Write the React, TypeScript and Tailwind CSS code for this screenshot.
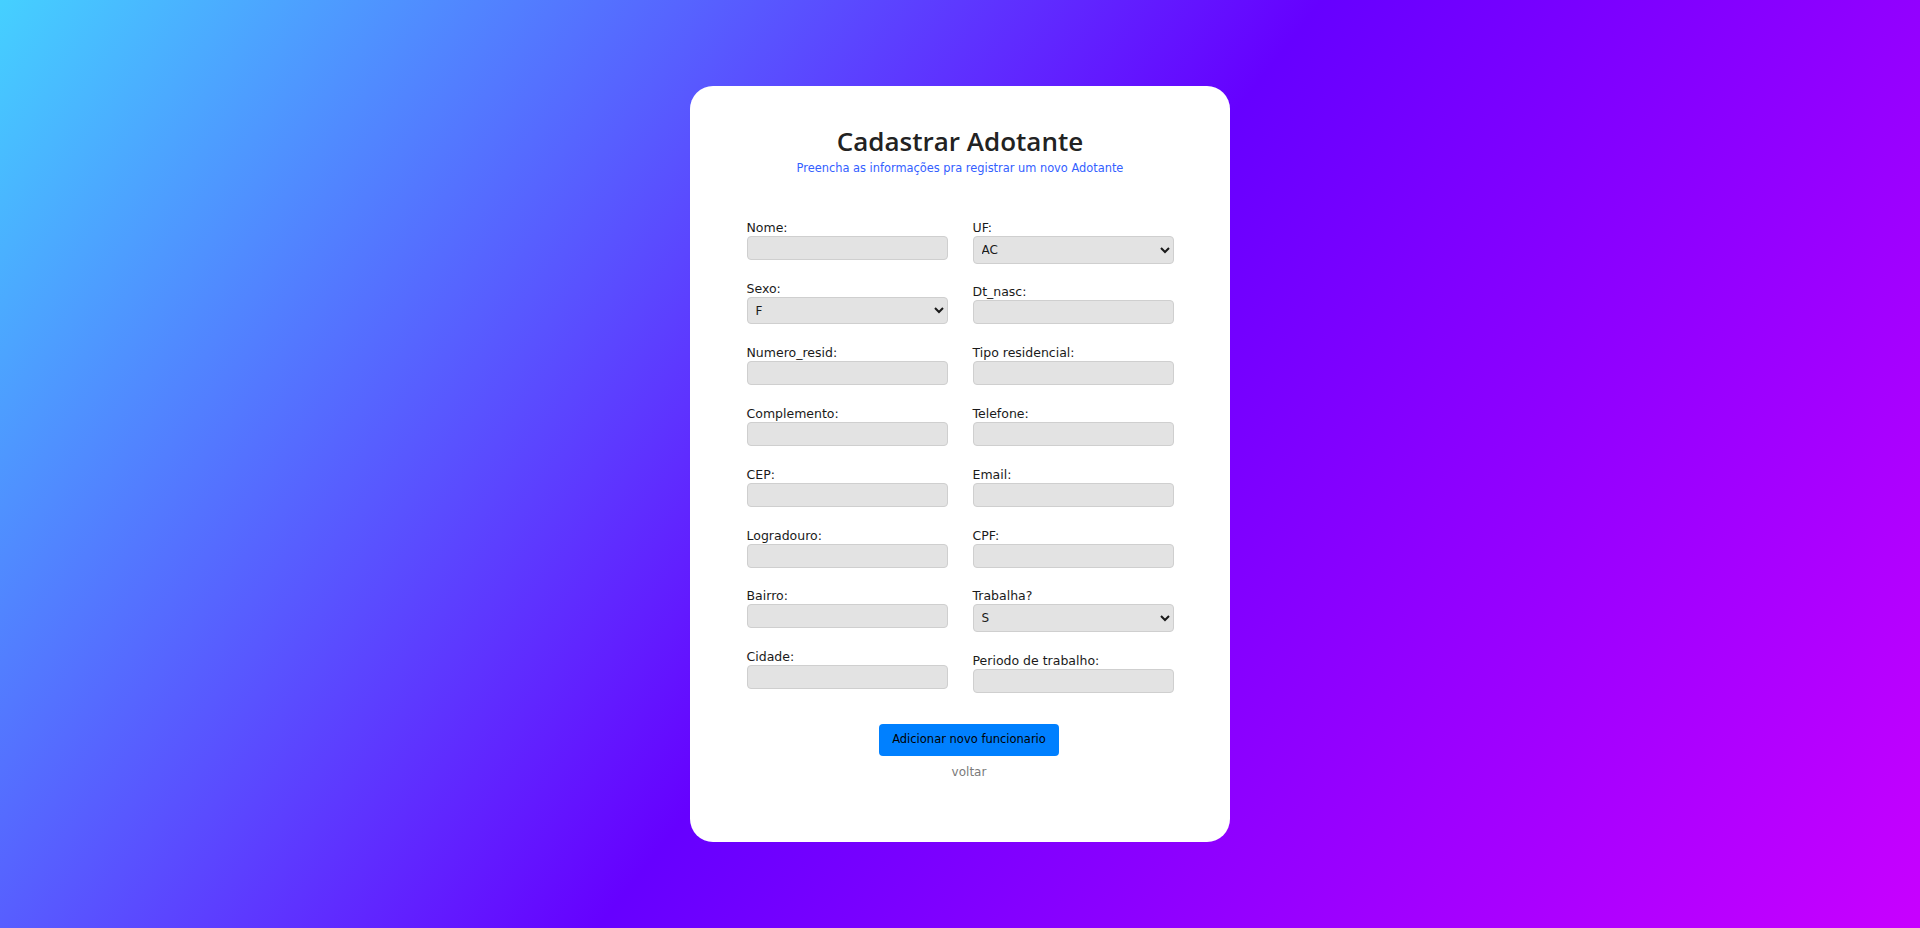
import React from "react";

type Field = { label: string; options?: string[] };

const leftFields: Field[] = [
  { label: "Nome:" },
  { label: "Sexo:", options: ["F", "M"] },
  { label: "Numero_resid:" },
  { label: "Complemento:" },
  { label: "CEP:" },
  { label: "Logradouro:" },
  { label: "Bairro:" },
  { label: "Cidade:" },
];

const rightFields: Field[] = [
  {
    label: "UF:",
    options: ["AC", "AL", "AP", "AM", "BA", "CE", "DF", "ES", "GO", "MA", "MT", "MS", "MG", "PA", "PB", "PR", "PE", "PI", "RJ", "RN", "RS", "RO", "RR", "SC", "SP", "SE", "TO"],
  },
  { label: "Dt_nasc:" },
  { label: "Tipo residencial:" },
  { label: "Telefone:" },
  { label: "Email:" },
  { label: "CPF:" },
  { label: "Trabalha?", options: ["S", "N"] },
  { label: "Periodo de trabalho:" },
];

function FieldBox({ f }: { f: Field }) {
  return (
    <div className="flex flex-col mb-[20.8px]">
      <label className="h-[16px] leading-[16px] text-[12.5px] text-[#1a1a1a]">{f.label}</label>
      {f.options ? (
        <select className="h-[27.6px] w-full rounded-[4px] border border-[#cfcfcf] bg-[#e3e3e3] pl-[4px] text-[12px] text-[#1a1a1a]">
          {f.options.map((o) => (
            <option key={o}>{o}</option>
          ))}
        </select>
      ) : (
        <input
          type="text"
          className="h-[24px] w-full rounded-[4px] border border-[#cfcfcf] bg-[#e3e3e3] px-[6px] text-[12px] text-[#1a1a1a] outline-none"
        />
      )}
    </div>
  );
}

export default function App() {
  return (
    <div className="flex h-screen w-full items-center justify-center bg-[linear-gradient(128deg,#45d0ff_0%,#6600ff_50%,#c800ff_100%)] font-['DejaVu_Sans',sans-serif]">
      <div className="flex w-[540px] flex-col items-center rounded-[23px] bg-white pt-[39px] pb-[62px]">
        <h1 className="h-[32px] font-['Open_Sans',sans-serif] text-[26px] leading-[32px] font-semibold text-[#222222]">
          Cadastrar Adotante
        </h1>
        <p className="mt-[3px] h-[16px] text-[11.4px] leading-[16px] text-[#3360ff]">
          Preencha as informações pra registrar um novo Adotante
        </p>
        <form className="mt-[44px] flex flex-col items-center">
          <div className="flex gap-[25px]">
            <div className="flex w-[201px] flex-col">
              {leftFields.map((f) => (
                <FieldBox key={f.label} f={f} />
              ))}
            </div>
            <div className="flex w-[201px] flex-col">
              {rightFields.map((f) => (
                <FieldBox key={f.label} f={f} />
              ))}
            </div>
          </div>
          <button
            type="button"
            className="mt-[10.5px] ml-[18px] h-[32px] w-[180px] rounded-[4px] bg-[#0080ff] text-[11.5px] text-[#000000]"
          >
            Adicionar novo funcionario
          </button>
          <a className="mt-[8px] ml-[18px] h-[16px] cursor-pointer text-[12px] leading-[16px] text-[#7a7a7a]">voltar</a>
        </form>
      </div>
    </div>
  );
}
